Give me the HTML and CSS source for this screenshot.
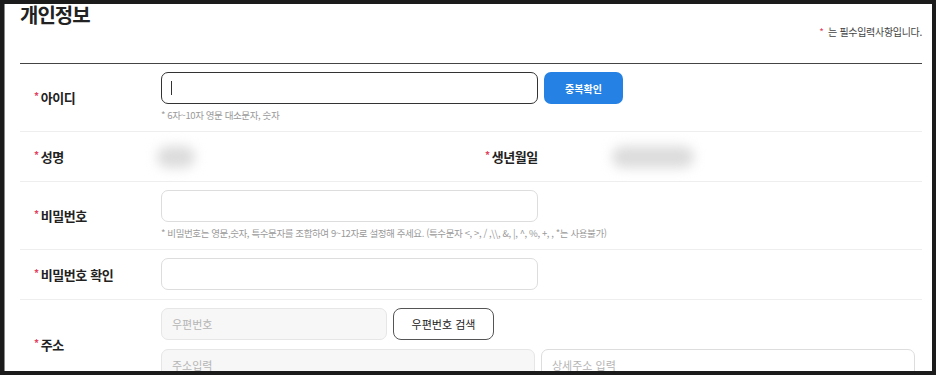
FILE: index.html
```html
<!DOCTYPE html>
<html lang="ko">
<head>
  <meta charset="UTF-8">
  <meta name="viewport" content="width=device-width, initial-scale=1.0">
  <title>개인정보</title>
  <link rel="stylesheet" href="styles.css">
</head>
<body>
  <div class="frame">
    <div class="head">
      <h2>개인정보</h2>
      <p class="req-note"><span class="star">*</span> 는 필수입력사항입니다.</p>
    </div>

    <div class="row">
      <div class="label"><span class="star">*</span>아이디</div>
      <div class="field">
        <div class="line">
          <div class="box">
            <input type="text" class="input focus">
            <span class="caret"></span>
          </div>
          <button class="btn-blue">중복확인</button>
        </div>
        <p class="hint">* 6자~10자 영문 대소문자, 숫자</p>
      </div>
    </div>

    <div class="row row-half">
      <div class="half">
        <div class="label"><span class="star">*</span>성명</div>
        <div class="field"><span class="blur name"></span></div>
      </div>
      <div class="half">
        <div class="label"><span class="star">*</span>생년월일</div>
        <div class="field"><span class="blur birth"></span></div>
      </div>
    </div>

    <div class="row">
      <div class="label"><span class="star">*</span>비밀번호</div>
      <div class="field">
        <input type="password" class="input">
        <p class="hint">* 비밀번호는 영문,숫자, 특수문자를 조합하여 9~12자로 설정해 주세요. (특수문자 &lt;, &gt;, / ,\\, &amp;, |, ^, %, +, , *는 사용불가)</p>
      </div>
    </div>

    <div class="row">
      <div class="label"><span class="star">*</span>비밀번호 확인</div>
      <div class="field">
        <input type="password" class="input">
      </div>
    </div>

    <div class="row row-addr">
      <div class="label"><span class="star">*</span>주소</div>
      <div class="field">
        <div class="line">
          <input type="text" class="input zip" placeholder="우편번호" readonly>
          <button class="btn-line">우편번호 검색</button>
        </div>
        <div class="line">
          <input type="text" class="input addr" placeholder="주소입력" readonly>
          <input type="text" class="input addr detail" placeholder="상세주소 입력">
        </div>
      </div>
    </div>
  </div>
</body>
</html>
```

FILE: styles.css
```css
body {
  margin: 0;
  background: #1b1b1b;
  font-family: "Noto Sans CJK KR", "Noto Sans", sans-serif;
  color: #222;
}
.frame {
  display: flow-root;
  margin: 4px;
  height: 367px;
  background: #fff;
  border-left: 1px solid #8a8a8a;
  box-sizing: border-box;
  padding: 0 10px 0 15px;
  overflow: hidden;
}
.head {
  position: relative;
  display: flow-root;
  height: 59px;
  border-bottom: 1px solid #444;
}
.head h2 {
  margin: 0;
  font-size: 20px;
  line-height: 22px;
  font-weight: 700;
  letter-spacing: -1px;
  color: #222;
}
.req-note {
  margin: 0;
  position: absolute;
  right: 0;
  top: 20px;
  font-size: 10px;
  color: #444;
  letter-spacing: -0.3px;
}
.star {
  color: #e2415f;
  font-size: 10px;
  vertical-align: 3px;
  margin-right: 2px;
}
.req-note .star {
  vertical-align: 0;
}
.row {
  display: flex;
  align-items: center;
  padding: 8px 0 9px;
  border-bottom: 1px solid #eee;
}
.label {
  width: 127px;
  flex: none;
  padding-left: 14px;
  font-size: 13px;
  font-weight: 700;
  letter-spacing: -0.4px;
  color: #222;
}
.row-half {
  padding: 0;
  height: 49px;
}
.half {
  flex: 1;
  display: flex;
  align-items: center;
}
.field {
  flex: 1;
}
.line {
  display: flex;
  gap: 6px;
}
.line + .line {
  margin-top: 9px;
}
.box {
  position: relative;
}
.input {
  display: block;
  width: 377px;
  height: 32px;
  box-sizing: border-box;
  border: 1px solid #ddd;
  border-radius: 7px;
  padding: 0 10px;
  font-family: inherit;
  font-size: 11px;
  background: #fff;
}
.input::placeholder {
  color: #b5b5b5;
}
.input.focus {
  border: 1.5px solid #333;
  outline: none;
}
.caret {
  position: absolute;
  left: 10px;
  top: 9px;
  width: 1px;
  height: 14px;
  background: #333;
}
.btn-blue {
  width: 79px;
  height: 32px;
  border: 0;
  border-radius: 7px;
  background: #2581e3;
  color: #fff;
  font-family: inherit;
  font-size: 10px;
  font-weight: 700;
}
.hint {
  margin: 4px 0 0;
  font-size: 9.5px;
  color: #9a9a9a;
  letter-spacing: -0.4px;
  height: 14px;
  line-height: 14px;
}
.zip {
  width: 226px;
  background: #f7f7f7;
  border-color: #e6e6e6;
}
.btn-line {
  width: 101px;
  height: 32px;
  border: 1px solid #555;
  border-radius: 8px;
  background: #fff;
  color: #222;
  font-family: inherit;
  font-size: 11px;
}
.addr {
  width: 374px;
  background: #f7f7f7;
  border-color: #e6e6e6;
}
.addr.detail {
  background: #fff;
  border-color: #ddd;
}
.row-addr {
  border-bottom: 0;
}
.blur {
  display: block;
  height: 22px;
  background: #dcdcdc;
  border-radius: 11px;
  filter: blur(6px);
}
.blur.name {
  width: 38px;
  margin-left: -4px;
}
.blur.birth {
  width: 82px;
  margin-left: 0;
}
```
